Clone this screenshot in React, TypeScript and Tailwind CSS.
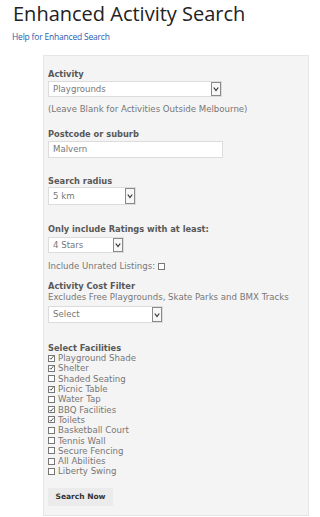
import React from 'react';

const facilities: [string, boolean][] = [
  ['Playground Shade', true],
  ['Shelter', true],
  ['Shaded Seating', false],
  ['Picnic Table', true],
  ['Water Tap', false],
  ['BBQ Facilities', true],
  ['Toilets', true],
  ['Basketball Court', false],
  ['Tennis Wall', false],
  ['Secure Fencing', false],
  ['All Abilities', false],
  ['Liberty Swing', false],
];

function Box({ checked }: { checked: boolean }) {
  return (
    <span className="inline-flex w-[7px] h-[7px] border border-[#777] bg-white items-center justify-center shrink-0">
      {checked && (
        <svg viewBox="0 0 8 8" className="w-[6px] h-[6px]">
          <path d="M1 4 L3 6 L7 1" fill="none" stroke="#444" strokeWidth="1.4" />
        </svg>
      )}
    </span>
  );
}

function Select({ value, width, height }: { value: string; width: string; height: string }) {
  return (
    <div className={`flex items-center bg-white border border-[#dcdcdc] ${width} ${height}`}>
      <span className="flex-1 pl-[4px] text-[#777]">{value}</span>
      <span className="w-[10px] h-full border border-[#8a8a8a] bg-[#f7f7f7] flex items-center justify-center">
        <svg viewBox="0 0 8 8" className="w-[6px] h-[6px]">
          <path d="M1 2 L4 6 L7 2" fill="none" stroke="#333" strokeWidth="1.6" />
        </svg>
      </span>
    </div>
  );
}

function Label({ children, className = '' }: { children: React.ReactNode; className?: string }) {
  return (
    <div className={`font-bold text-[#585858] text-[9.2px] leading-[11px] font-['DejaVu_Sans_Condensed','DejaVu_Sans',sans-serif] ${className}`}>
      {children}
    </div>
  );
}

export default function App() {
  return (
    <div className="w-[320px] h-[517px] bg-white overflow-hidden">
      <h1 className="pl-[13px] text-[20px] leading-[28px] text-[#222] font-['Open_Sans',sans-serif]">
        Enhanced Activity Search
      </h1>
      <a className="block mt-[4px] pl-[12px] text-[8.5px] leading-[9px] text-[#2a5db0] font-['Open_Sans',sans-serif] tracking-[-0.2px]">
        Help for Enhanced Search
      </a>
      <div className="ml-[43px] mt-[14px] w-[266px] h-[461px] bg-[#f4f4f4] border border-[#e6e6e6] pl-[4px] pt-[12px] text-[8.6px] text-[#777] font-['DejaVu_Sans',sans-serif]">
        <Label>Activity</Label>
        <div className="mt-[2px]">
          <Select value="Playgrounds" width="w-[174px]" height="h-[16px]" />
        </div>
        <div className="mt-[7px] leading-[11px]">(Leave Blank for Activities Outside Melbourne)</div>

        <Label className="mt-[13px]">Postcode or suburb</Label>
        <div className="mt-[2px] w-[175px] h-[17px] bg-white border border-[#dcdcdc] pl-[4px] leading-[15px]">Malvern</div>

        <Label className="mt-[17px]">Search radius</Label>
        <div className="mt-[1px]">
          <Select value="5 km" width="w-[88px]" height="h-[18px]" />
        </div>

        <Label className="mt-[18px]">Only include Ratings with at least:</Label>
        <div className="mt-[3px]">
          <Select value="4 Stars" width="w-[76px]" height="h-[16px]" />
        </div>

        <div className="mt-[8px] h-[11px] flex items-center gap-[3px]">
          Include Unrated Listings: <Box checked={false} />
        </div>

        <Label className="mt-[8px]">Activity Cost Filter</Label>
        <div className="mt-[1px] leading-[11px]">Excludes Free Playgrounds, Skate Parks and BMX Tracks</div>
        <div className="mt-[3px]">
          <Select value="Select" width="w-[115px]" height="h-[17px]" />
        </div>

        <Label className="mt-[19px]">Select Facilities</Label>
        <div className="flex flex-col">
          {facilities.map(([name, checked]) => (
            <div key={name} className="flex items-center gap-[3px] h-[10.3px]">
              <Box checked={checked} />
              <span className="leading-[10px]">{name}</span>
            </div>
          ))}
        </div>

        <button className="mt-[11px] h-[18px] w-[65px] bg-[#ebebeb] text-[#333] font-bold text-[7.5px] font-['DejaVu_Sans',sans-serif]">
          Search Now
        </button>
      </div>
    </div>
  );
}
